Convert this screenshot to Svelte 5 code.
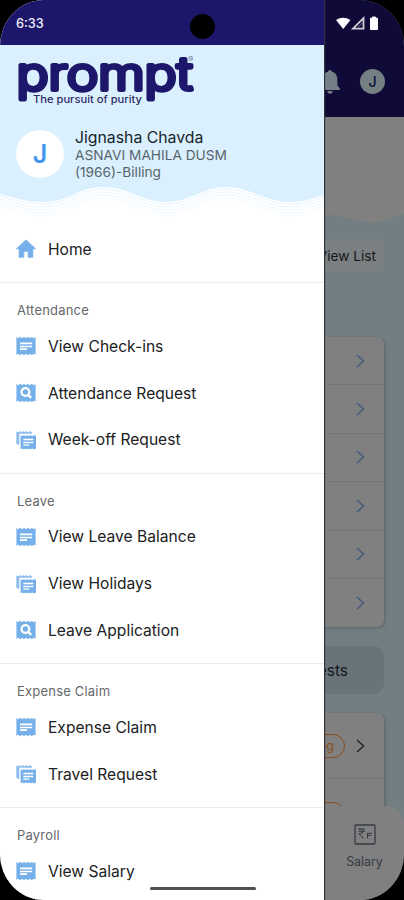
<script>
  const sections = [
    { title: 'Attendance', items: [['View Check-ins', 'note'], ['Attendance Request', 'search'], ['Week-off Request', 'stack']] },
    { title: 'Leave', items: [['View Leave Balance', 'note'], ['View Holidays', 'stack'], ['Leave Application', 'search']] },
    { title: 'Expense Claim', items: [['Expense Claim', 'note'], ['Travel Request', 'stack']] },
    { title: 'Payroll', items: [['View Salary', 'note']] }
  ];
  const waves = [0, 3, 6, 9, 12];
  const rows = [1, 2, 3, 4, 5, 6];
</script>

{#snippet icon(kind)}
  <svg class="icon" width="20" height="20" viewBox="0 0 20 20">
    {#if kind === 'home'}
      <path d="M10 .8 19.6 9.8H16.9V18.3H12.2V12.4H7.8V18.3H3.1V9.8H.4Z" fill="#76b0ea" stroke="#76b0ea" stroke-width=".7" stroke-linejoin="round" />
    {:else if kind === 'stack'}
      <path d="M.3 1.3 2 2.4 3.7 1 5.4 2.4 7.1 1 8.8 2.4 10.5 1 12.2 2.4 13.9 1 15.8 2.2V3.7H3.3V15L.3 14Z" fill="#8bbdee" />
      <path d="M4.6 5.3 6.3 6.3 7.9 5.1 9.6 6.3 11.3 5.1 13 6.3 14.7 5.1 16.4 6.3 18 5.1 20 6V18.6L18.1 19.5 16.4 18.4 14.7 19.5 13 18.4 11.3 19.5 9.6 18.4 7.9 19.5 6.3 18.4 4.6 19.3Z" fill="#76b0ea" />
      <path d="M7.3 9.5H17.3M7.3 12.5H17.3M7.3 15.1H13" stroke="#fff" stroke-width="1.4" />
    {:else}
      <path d="M.4 1 2.3 2.2 4.2 .8 6.1 2.2 8 .8 10 2.2 12 .8 13.9 2.2 15.8 .8 17.7 2.2 19.6 1V18.5L17.7 17.8 15.8 19.3 13.9 17.8 12 19.3 10 17.8 8 19.3 6.1 17.8 4.2 19.3 2.3 17.8 .4 18.8Z" fill="#76b0ea" />
      {#if kind === 'note'}
        <path d="M4 7.3H16.2M4 10.5H16.2M4 13.2H11" stroke="#fff" stroke-width="1.7" />
      {:else}
        <circle cx="9.4" cy="9" r="3.9" fill="none" stroke="#fff" stroke-width="2.3" />
        <path d="m12 11.7 3.2 3.2" stroke="#fff" stroke-width="2.4" />
      {/if}
    {/if}
  </svg>
{/snippet}

{#snippet chevron(color)}
  <svg width="9" height="14" viewBox="0 0 9 14"><path d="m1 1 6.5 6L1 13" fill="none" stroke={color} stroke-width="1.5" /></svg>
{/snippet}

<div class="phone">
  <div class="page">
    <header>
      <svg width="24" height="26" viewBox="0 0 24 26"><path d="M12 1q1.9 0 2 1.8c4 1 5.4 4 5.4 8.4v5.2l2.5 3V21H2.1v-1.6l2.5-3v-5.2c0-4.4 1.4-7.4 5.4-8.4Q10.1 1 12 1ZM9.3 22h5.4q-.3 2.8-2.7 2.8T9.3 22Z" fill="#747f88" /></svg>
      <span class="me">J</span>
    </header>
    <main>
      <svg class="hill" width="404" height="112" viewBox="0 0 404 112"><path d="M0 0H404V97C385 103 380 109 360 104 342 101 331 95 312 98L0 105Z" fill="#808080" /></svg>
      <div class="view">View List</div>
      <section class="card list">
        {#each rows as row (row)}<div class="row">{@render chevron('#465a79')}</div>{/each}
      </section>
      <div class="requests">My Requests</div>
      <section class="card second">
        <div class="request"><span class="pill">Pending</span>{@render chevron('#22282d')}</div>
        <div class="request next"><span class="pill"></span></div>
      </section>
    </main>
    <nav>
      <div class="tab">
        <svg width="22" height="21" viewBox="0 0 22 21" fill="none" stroke="#353a43"><rect x="1" y="1" width="20" height="19" rx="1" stroke-width="1.3" /><path d="M4.5 5H11M4.5 7.3H11M4.5 5H6.5Q9.5 5.2 9.2 7.3 9 9.7 5 9.7L9.5 14.5M13 9.3H18M13 11.3H17M13.5 9V14.5" stroke-width="1" /></svg>
        <span>Salary</span>
      </div>
    </nav>
  </div>

  <aside>
    <div class="profile">
      <svg class="logo" width="200" height="58" viewBox="0 0 200 58">
        <text class="word" x="16.5" y="40.5" textLength="176" lengthAdjust="spacingAndGlyphs">prompt</text>
        <text class="reg" x="188" y="13">®</text>
        <text class="tag" x="33" y="54" textLength="109" lengthAdjust="spacingAndGlyphs">The pursuit of purity</text>
      </svg>
      <div class="person">
        <div class="avatar">J</div>
        <div class="who">
          <strong>Jignasha Chavda</strong>
          <span>ASNAVI MAHILA DUSM</span>
          <span>(1966)-Billing</span>
        </div>
      </div>
      <svg class="wave" width="324" height="38" viewBox="0 0 324 38">
        <path d="M0 12C12 15 25 20 43 20 70 20 78 5 103 5S142 20 166 20 203 5 226 5 266 20 290 20C304 20 311 17 324 13V38H0Z" fill="#fff" />
        {#each waves as y (y)}
          <path d="M0 12C12 15 25 20 43 20 70 20 78 5 103 5S142 20 166 20 203 5 226 5 266 20 290 20C304 20 311 17 324 13" transform="translate(0 {y + 2})" fill="none" stroke="#e3f3fe" stroke-width=".9" opacity={1 - y / 16} />
        {/each}
      </svg>
    </div>
    <div class="home item">{@render icon('home')}<span>Home</span></div>
    {#each sections as section (section.title)}
      <div class="group">
        <h2>{section.title}</h2>
        {#each section.items as [label, kind] (label)}
          <div class="item">{@render icon(kind)}<span>{label}</span></div>
        {/each}
      </div>
    {/each}
  </aside>

  <div class="status">
    <span class="time">6:33</span>
    <i class="camera"></i>
    <svg width="46" height="18" viewBox="0 0 46 18">
      <path d="M1 5Q8 .5 15.5 5L8.2 14Z" fill="#fff" />
      <path d="M28.5 3.2V13.7H18Z" fill="none" stroke="#d0d0d7" stroke-width="1.8" /><path d="M22 13.5 28 7" stroke="#777489" />
      <path d="M37.5 2H40.5V3.2H42.5V14.5H35.5V3.2H37.5Z" fill="#fff" stroke="#fff" stroke-linejoin="round" />
    </svg>
  </div>
  <div class="gesture"></div>
</div>

<style>
  :global(body) { margin: 0; background: #000; }
  * { box-sizing: border-box; }
  svg { display: block; flex: none; }
  .phone { position: relative; width: 404px; height: 900px; overflow: hidden; border-radius: 44px / 46px; background: #737e82; font-family: Inter, "Liberation Sans", sans-serif; }
  .page { height: 900px; display: flex; flex-direction: column; }
  header { height: 117px; flex: none; background: #0f0a38; display: flex; justify-content: flex-end; align-items: flex-start; gap: 18px; padding: 69px 19px 0 0; }
  .me { width: 25px; height: 25px; border-radius: 50%; background: #747f84; color: #151c42; font-size: 14px; font-weight: 600; display: grid; place-items: center; }
  main { height: 689px; overflow: hidden; background: #737e82; display: flex; flex-direction: column; padding-right: 20px; }
  .hill { margin-bottom: 10px; }
  .view { align-self: flex-end; width: 110px; height: 33px; line-height: 34px; flex: none; padding-right: 8px; text-align: right; border-radius: 5px; background: #7a8081; color: #161718; font-size: 13.7px; }
  .card { background: #808080; border-radius: 7px; box-shadow: 1px 1px 3px #5b6467; flex: none; }
  .list { margin-top: 65px; height: 290px; }
  .row { height: 48.4px; display: flex; align-items: center; justify-content: flex-end; padding-right: 19px; border-bottom: 1px solid #767778; }
  .row:last-child { border: 0; }
  .requests { flex: none; margin: 19px 0; height: 48px; line-height: 49px; border-radius: 11px; background: #697478; color: #14191c; text-align: right; padding-right: 36px; font-size: 15.5px; }
  .second { height: 132px; }
  .request { height: 66px; display: flex; align-items: center; justify-content: flex-end; gap: 11px; padding-right: 19px; border-bottom: 1px dotted #6a6c6d; }
  .pill { height: 24px; line-height: 21px; border: 1.5px solid #8a4c18; color: #8a4c18; border-radius: 12px; padding: 0 10px; font-size: 12.5px; }
  .next { align-items: flex-start; padding: 23px 39px 0 0; border: 0; }
  .next .pill { width: 70px; }
  nav { height: 94px; background: #808080; border-radius: 0 18px 0 0; display: flex; justify-content: flex-end; padding: 18px 21px 0 0; }
  .tab { width: 37px; display: flex; flex-direction: column; align-items: center; gap: 9px; color: #353a43; font-size: 12.4px; line-height: 16px; }
  aside { position: absolute; top: 0; left: 0; width: 324px; height: 900px; padding-top: 45px; background: #fff; overflow: hidden; box-shadow: 1px 0 1px #303438; }
  .profile { height: 175px; background: #daf0fe; display: flex; flex-direction: column; justify-content: space-between; }
  .logo { margin-top: 4px; overflow: visible; }
  .word { font: 300 45px Inter, sans-serif; fill: #1d176b; stroke: #1d176b; stroke-width: 4.2px; stroke-linejoin: round; }
  .reg { font: 8px Inter, sans-serif; fill: #65769d; }
  .tag { font: 500 9.8px Inter, sans-serif; fill: #302b65; }
  .person { display: flex; height: 58px; padding-left: 16px; gap: 11px; margin-top: 17px; }
  .avatar { width: 48px; height: 48px; margin-top: 6px; border-radius: 50%; background: #fff; color: #4396f0; font-size: 25px; font-weight: 600; display: grid; place-items: center; }
  .who { display: flex; flex-direction: column; color: #59656d; font-size: 13.7px; line-height: 17px; padding-top: 4px; white-space: nowrap; }
  .who strong { color: #18242b; font-weight: 400; font-size: 15.8px; line-height: 19px; }
  .item { height: 46.75px; display: flex; align-items: center; gap: 12px; padding: 2px 0 0 16px; color: #202123; font-size: 15.6px; white-space: nowrap; }
  .home { height: 62px; padding: 0 0 4px 16px; }
  .group { border-top: 1px solid #ececec; padding: 16px 0 10.3px; }
  h2 { margin: 0; padding-left: 17px; font-size: 13px; font-weight: 400; line-height: 23px; color: #66686b; letter-spacing: .2px; }
  .status { position: absolute; top: 0; left: 0; width: 404px; height: 45px; background: linear-gradient(90deg, #1d176b 324px, transparent 324px); color: #eeeefa; font-weight: 500; font-size: 12.7px; display: flex; justify-content: space-between; padding: 15px 23px 0 16px; }
  .time { padding-top: 1px; }
  .camera { position: absolute; left: 190px; top: 14px; width: 25px; height: 25px; border-radius: 50%; background: #000; }
  .gesture { position: absolute; left: 150px; top: 887px; width: 106px; height: 3px; border-radius: 2px; background: #505050; }
</style>
